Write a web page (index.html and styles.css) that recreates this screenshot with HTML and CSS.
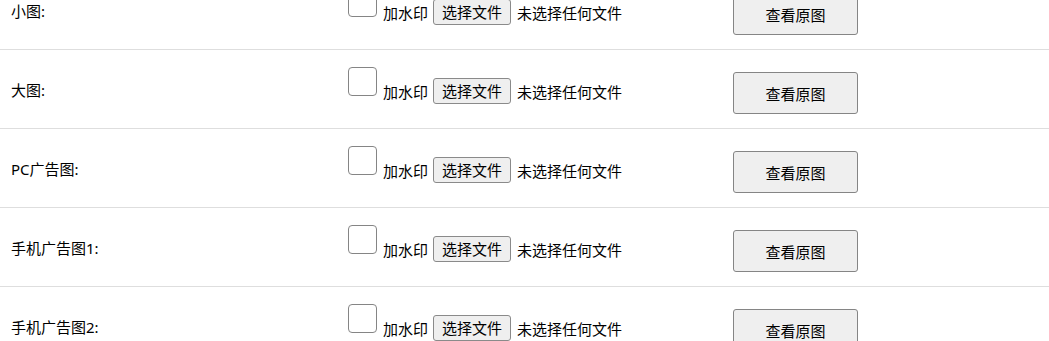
FILE: index.html
```html
<!DOCTYPE html>
<html lang="zh-CN">
<head>
<meta charset="utf-8">
<title>图片上传</title>
<link rel="stylesheet" href="styles.css">
</head>
<body>
<div class="list">
  <div class="row">
    <div class="label">小图:</div>
    <div class="upload">
      <input type="checkbox" class="chk">
      <span class="txt wm">加水印</span>
      <button class="file-btn" type="button">选择文件</button>
      <span class="txt none">未选择任何文件</span>
    </div>
    <div class="action"><button class="view-btn" type="button">查看原图</button></div>
  </div>
  <div class="row">
    <div class="label">大图:</div>
    <div class="upload">
      <input type="checkbox" class="chk">
      <span class="txt wm">加水印</span>
      <button class="file-btn" type="button">选择文件</button>
      <span class="txt none">未选择任何文件</span>
    </div>
    <div class="action"><button class="view-btn" type="button">查看原图</button></div>
  </div>
  <div class="row">
    <div class="label">PC广告图:</div>
    <div class="upload">
      <input type="checkbox" class="chk">
      <span class="txt wm">加水印</span>
      <button class="file-btn" type="button">选择文件</button>
      <span class="txt none">未选择任何文件</span>
    </div>
    <div class="action"><button class="view-btn" type="button">查看原图</button></div>
  </div>
  <div class="row">
    <div class="label">手机广告图1:</div>
    <div class="upload">
      <input type="checkbox" class="chk">
      <span class="txt wm">加水印</span>
      <button class="file-btn" type="button">选择文件</button>
      <span class="txt none">未选择任何文件</span>
    </div>
    <div class="action"><button class="view-btn" type="button">查看原图</button></div>
  </div>
  <div class="row">
    <div class="label">手机广告图2:</div>
    <div class="upload">
      <input type="checkbox" class="chk">
      <span class="txt wm">加水印</span>
      <button class="file-btn" type="button">选择文件</button>
      <span class="txt none">未选择任何文件</span>
    </div>
    <div class="action"><button class="view-btn" type="button">查看原图</button></div>
  </div>
</div>
</body>
</html>
```
FILE: styles.css
```css
html, body {
  margin: 0;
  padding: 0;
  background: #fff;
}
body {
  font-family: "Noto Sans", "Noto Sans CJK SC", sans-serif;
  font-size: 15px;
  color: #000;
  overflow: hidden;
}
.list {
  margin-top: -29px;
}
.row {
  display: grid;
  grid-template-columns: 344px 389px 1fr;
  height: 78px;
  border-bottom: 1px solid #dedede;
}
.label {
  padding: 30px 0 0 11px;
  line-height: 20px;
  white-space: nowrap;
}
.upload {
  display: flex;
  align-items: flex-start;
}
.chk {
  appearance: none;
  -webkit-appearance: none;
  box-sizing: border-box;
  width: 29px;
  height: 29px;
  margin: 17px 0 0 4px;
  border: 1px solid #858585;
  border-radius: 4px;
  background: #fff;
}
.txt {
  line-height: 20px;
  margin-top: 32px;
  white-space: nowrap;
}
.wm {
  margin-left: 6px;
}
.file-btn {
  box-sizing: border-box;
  width: 78px;
  height: 26px;
  margin: 28px 0 0 5px;
  padding: 0;
  font: inherit;
  font-size: 15px;
  line-height: 20px;
  color: #000;
  background: #efefef;
  border: 1px solid #8a8a8a;
  border-radius: 3px;
}
.none {
  margin-left: 6px;
}
.action {
  display: flex;
  align-items: flex-start;
}
.view-btn {
  box-sizing: border-box;
  width: 125px;
  height: 42px;
  margin-top: 22px;
  padding: 0;
  font: inherit;
  font-size: 15px;
  color: #000;
  background: #efefef;
  border: 1px solid #858585;
  border-radius: 3px;
}
```
